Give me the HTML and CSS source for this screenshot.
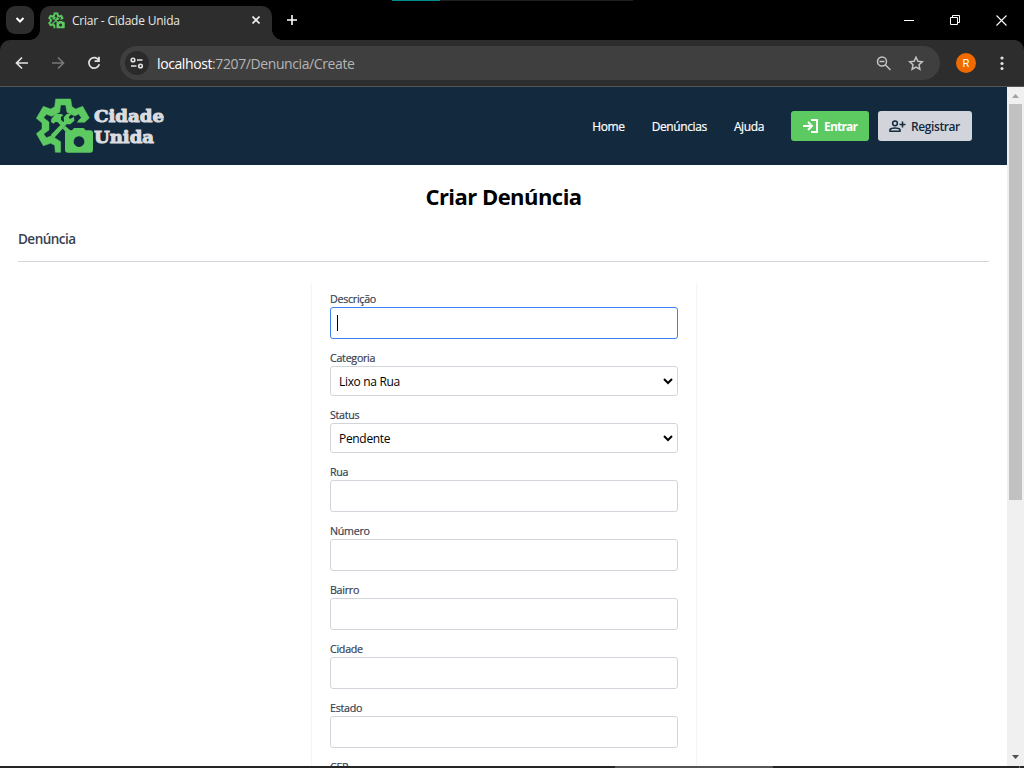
FILE: index.html
```html
<!DOCTYPE html>
<html lang="pt-BR">
<head>
<meta charset="utf-8">
<title>Criar - Cidade Unida</title>
<link rel="stylesheet" href="styles.css">
</head>
<body>
<svg class="defs" width="0" height="0">
  <symbol id="logo" viewBox="48 39 174 168">
    <path fill="#5cc961" stroke="#5cc961" stroke-width="1.500" d="M107 42H152L156 65 167 72 188 64 208 99 194 112H172L176 106 184 98 176 87 164 93 141 82 137 60H122L119 82 95 94 79 88 71 98 87 111V135L71 147 79 158 95 152 122 170V202H106L104 181 92 175 70 182 49 146 66 132V114L49 100 70 64 92 72 104 65Z"/>
    <path fill="#5cc961" d="M94 102l12-15h18l6 4-7 5v8l7 7-9 9-9-9h-6l-5 5-8-5zM92 150l40-41-1-12 10-11 14 0-9 11 4 5 12-7 1 12-12 11-11 0-38 42zM128 131l8-8 17 15-9 9z"/>
    <path fill="#5cc961" fill-rule="evenodd" d="M144 136h12l6-7h29l6 7h13q9 0 9 9v49q0 9-9 9h-66q-9 0-9-9v-49q0-9 9-9zM177 154a16 16 0 1 0 .1 0z"/>
  </symbol>
</svg>
<div class="window">
  <div class="tabstrip">
    <div class="accent"><i></i></div>
    <span class="tab-search"><svg width="10" height="8" viewBox="0 0 10 8"><path d="M1.500 2l3.500 3.500L8.500 2" fill="none" stroke="#fff" stroke-width="2"/></svg></span>
    <div class="tab">
      <svg class="favicon" width="17" height="17"><use href="#logo"/></svg>
      <span class="tab-title">Criar - Cidade Unida</span>
      <svg width="8" height="8" viewBox="0 0 8 8"><path d="M.5.5l7 7M7.500.5l-7 7" stroke="#eee" stroke-width="1.600"/></svg>
    </div>
    <svg class="plus" width="10" height="10" viewBox="0 0 10 10"><path d="M5 0v10M0 5h10" stroke="#fff" stroke-width="1.600"/></svg>
    <div class="controls">
      <svg width="10" height="10"><path d="M0 5.500h10" stroke="#fff"/></svg>
      <svg width="10" height="10" fill="none" stroke="#fff"><path d="M.5 2.500h7v7h-7zM2.500 2.500V.5h7v7h-2"/></svg>
      <svg width="11" height="11"><path d="M.5.5l10 10M10.500.5l-10 10" stroke="#fff" stroke-width="1.100"/></svg>
    </div>
  </div>
  <div class="toolbar">
    <svg class="nav-icon" width="14" height="14" viewBox="0 0 14 14"><path d="M13 7H2M7 1.500L1.500 7 7 12.500"/></svg>
    <svg class="nav-icon forward" width="14" height="14" viewBox="0 0 14 14"><path d="M1 7h11M7 1.500L12.500 7 7 12.500"/></svg>
    <svg class="nav-icon" width="14" height="14" viewBox="0 0 14 14"><path d="M11.800 4.200A5.300 5.300 0 1 0 12.300 8.300M12 .8v4.400H7.600"/></svg>
    <div class="omnibox">
      <span class="site"><svg width="14" height="12" viewBox="0 0 14 12" fill="none" stroke="#e3e3e3" stroke-width="1.600"><circle cx="3" cy="3" r="1.800"/><path d="M7 3h5.500M1 9h5.500"/><circle cx="10.500" cy="9" r="1.800"/></svg></span>
      <span class="url"><b>localhost</b>:7207/Denuncia/Create</span>
      <svg class="lens" width="15" height="15" viewBox="0 0 15 15" fill="none" stroke="#c4c4c4" stroke-width="1.500"><circle cx="6" cy="5.500" r="4.500"/><path d="M3.500 5.500h5M9.300 8.800l5.200 5.200"/></svg>
      <svg class="star" width="16" height="15" viewBox="0 0 16 15" fill="none" stroke="#c4c4c4" stroke-width="1.500"><path d="M8 1.200l1.900 4.100 4.400.5L11 8.800l.9 4.400L8 11l-3.900 2.200.9-4.400L1.700 5.800l4.400-.5z"/></svg>
    </div>
    <span class="avatar">R</span>
    <svg class="dots" width="4" height="14" fill="#e3e3e3"><circle cx="2" cy="2" r="1.600"/><circle cx="2" cy="7.500" r="1.600"/><circle cx="2" cy="12.500" r="1.500"/></svg>
  </div>
  <div class="viewport">
    <div class="page">
      <header class="header">
        <svg class="logo" width="58" height="56"><use href="#logo"/></svg>
        <svg class="wordmark" width="74" height="44"><text x="0" y="16.500" textLength="70" lengthAdjust="spacingAndGlyphs">Cidade</text><text x="0" y="37.500" textLength="60" lengthAdjust="spacingAndGlyphs">Unida</text></svg>
        <nav class="nav"><a>Home</a><a>Denúncias</a><a>Ajuda</a></nav>
        <a class="btn enter"><svg width="16" height="14" viewBox="0 0 16 14" fill="none" stroke="#fff" stroke-width="1.900"><path d="M0 7h8M5 3l4 4-4 4M8 1h6v12H8"/></svg><span>Entrar</span></a>
        <a class="btn register"><svg width="17" height="12" viewBox="0 0 17 12" fill="none" stroke="#13293d" stroke-width="1.500"><circle cx="6" cy="3.300" r="2.400"/><path d="M1 11.200V9.500C2.500 7.500 9.500 7.500 11 9.500v1.700zM13.500 1.500v6M10.500 4.500h6"/></svg><span>Registrar</span></a>
      </header>
      <main class="main">
        <h1><span>Criar Denúncia</span></h1>
        <h2><span>Denúncia</span></h2>
        <form class="card">
          <div class="field"><label>Descrição</label><div class="input focus"><i></i></div></div>
          <div class="field"><label>Categoria</label><div class="input select"><span>Lixo na Rua</span><svg width="10" height="7" viewBox="0 0 10 7"><path d="M1 1l4 4 4-4" fill="none" stroke="#000" stroke-width="2"/></svg></div></div>
          <div class="field"><label>Status</label><div class="input select"><span>Pendente</span><svg width="10" height="7" viewBox="0 0 10 7"><path d="M1 1l4 4 4-4" fill="none" stroke="#000" stroke-width="2"/></svg></div></div>
          <div class="field"><label>Rua</label><div class="input"></div></div>
          <div class="field"><label>Número</label><div class="input"></div></div>
          <div class="field"><label>Bairro</label><div class="input"></div></div>
          <div class="field"><label>Cidade</label><div class="input"></div></div>
          <div class="field"><label>Estado</label><div class="input"></div></div>
          <div class="field"><label>CEP</label><div class="input"></div></div>
        </form>
      </main>
    </div>
    <div class="scrollbar">
      <svg width="7" height="4"><path d="M0 4L3.500 0 7 4z" fill="#a3a3a3"/></svg>
      <i class="thumb"></i>
      <svg width="7" height="4"><path d="M0 0L3.500 4 7 0z" fill="#505050"/></svg>
    </div>
  </div>
  <div class="edge"><i></i><b></b></div>
</div>
</body>
</html>
```
FILE: styles.css
```css
* { box-sizing: border-box; }
body { margin: 0; overflow: hidden; font-family: "Open Sans", "Noto Sans", sans-serif; font-size: 12px; }
svg { display: block; flex: none; }
.defs { position: absolute; }
.window { width: 1024px; height: 768px; display: flex; flex-direction: column; background: #000; overflow: hidden; }
.tabstrip { height: 40px; flex: none; display: flex; align-items: center; padding-left: 6px; position: relative; }
.accent { position: absolute; left: 392px; top: 0; width: 241px; height: 1px; background: #202020; }
.accent i { display: block; width: 48px; height: 1px; background: #008c8c; }
.tab-search { width: 28px; height: 28px; border-radius: 9px; background: #2d2d2d; display: flex; align-items: center; justify-content: center; }
.tab { position: relative; width: 232px; height: 34px; margin: 6px 0 0 6px; padding: 0 12px 6px 8px; border-radius: 10px 10px 0 0; background: #2d2d2d; display: flex; align-items: center; color: #e8e8e8; }
.tab::before, .tab::after { content: ""; position: absolute; bottom: 0; width: 10px; height: 10px; }
.tab::before { left: -10px; background: radial-gradient(circle at 0 0, transparent 9.5px, #2d2d2d 10px); }
.tab::after { right: -10px; background: radial-gradient(circle at 100% 0, transparent 9.5px, #2d2d2d 10px); }
.tab-title { margin-left: 7px; flex: 1; letter-spacing: -0.22px; white-space: nowrap; padding-top: 1px; }
.plus { margin-left: 15px; }
.controls { margin-left: auto; display: flex; align-items: center; gap: 36px; padding-right: 17px; }
.toolbar { height: 47px; flex: none; display: flex; align-items: center; padding-left: 15px; background: #2d2d2d; border-bottom: 1px solid #555; border-radius: 10px 10px 0 0; }
.nav-icon { margin-right: 22px; fill: none; stroke: #e3e3e3; stroke-width: 1.7; }
.forward { stroke: #777; }
.omnibox { width: 820px; height: 34px; margin-left: -3px; border-radius: 17px; background: #3f3f3f; display: flex; align-items: center; padding: 0 16px 0 5px; }
.site { width: 24px; height: 24px; border-radius: 50%; background: #2a2a2a; display: flex; align-items: center; justify-content: center; }
.url { flex: 1; margin-left: 8px; font-size: 14px; color: #b5b5b5; letter-spacing: -0.4px; }
.url b { font-weight: 400; color: #fff; }
.star { margin-left: 17px; }
.avatar { width: 20px; height: 20px; margin-left: 16px; border-radius: 50%; background: #f06a00; color: #fff; display: flex; align-items: center; justify-content: center; font: 11px Roboto, sans-serif; }
.dots { margin-left: 24px; }
.viewport { flex: 1; min-height: 0; display: flex; background: #fff; }
.page { width: 1007px; height: 679px; overflow: hidden; }
.header { height: 78px; background: #13293d; display: flex; align-items: center; padding: 0 35px 0 36px; }
.wordmark { margin: 2px 0 0; }
.wordmark text { font: 700 17px "DejaVu Serif", serif; fill: #dcdcdf; stroke: #dcdcdf; stroke-width: 1px; }
.nav { margin-left: auto; margin-right: 27px; display: flex; gap: 27px; color: #fff; padding-top: 1px; white-space: nowrap; letter-spacing: -.38px; -webkit-text-stroke: .2px #fff; }
.btn { height: 30px; border-radius: 3px; display: flex; align-items: center; white-space: nowrap; }
.enter { width: 78px; background: #5cc961; color: #fff; padding-left: 12px; font-weight: 700; }
.enter span { margin-left: 5px; letter-spacing: -.8px; }
.register { width: 94px; margin-left: 9px; background: #d1d5db; color: #13293d; padding-left: 11px; font-weight: 600; }
.register span { margin-left: 5px; letter-spacing: -.4px; }
.main { padding: 14px 18px 0; }
h1 { margin: 0; height: 34px; line-height: 34px; text-align: center; font-size: 22px; font-weight: 700; letter-spacing: -.54px; }
h2 { margin: 16px 0 0; height: 33px; line-height: 20px; border-bottom: 1px solid #d1d5db; font-size: 13.5px; font-weight: 600; color: #374151; letter-spacing: -.52px; }
.card { width: 384px; margin: 18px 0 0 294px; padding: 11px 18px 18px; height: 900px; border-radius: 4px; box-shadow: 0 1px 2px rgba(0,0,0,.16); }
.field { margin-bottom: 11px; }
label { display: block; height: 16px; line-height: 16px; font-size: 10.7px; color: #374151; letter-spacing: -.28px; -webkit-text-stroke: .2px #374151; }
.input { height: 32px; border: 1px solid #d1d5db; border-radius: 3px; background: #fff; }
.focus { border-color: #3b82f6; padding: 7px 6px; }
.focus i { display: block; width: 1px; height: 16px; background: #000; }
.select { height: 30px; display: flex; align-items: center; justify-content: space-between; padding: 1px 4px 0 8px; letter-spacing: -.32px; }
.scrollbar { width: 17px; background: #f0f0f0; display: flex; flex-direction: column; align-items: center; padding: 7px 0; }
.thumb { width: 13px; height: 396px; margin: 6px 0 auto; background: #c1c1c1; }
.edge { height: 2px; flex: none; background: #252525; display: flex; }
.edge i { width: 158px; margin-left: 615px; background: #555; }
.edge b { width: 1px; margin-left: 246px; background: #777; }
```
